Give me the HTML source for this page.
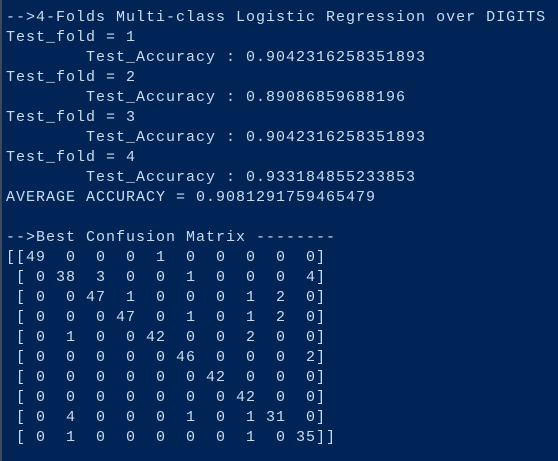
<!DOCTYPE html>
<html><head><meta charset="utf-8"><style>
html,body{margin:0;padding:0;}
body{width:558px;height:461px;background:#012456;overflow:hidden;border-left:2px solid #3c4a5e;box-sizing:border-box;}
pre{margin:0;padding:8px 0 0 4px;font-family:"Liberation Mono","Courier New",monospace;font-size:15px;letter-spacing:1px;line-height:20px;color:#c8dcf0;white-space:pre;}
</style></head><body><pre>--&gt;4-Folds Multi-class Logistic Regression over DIGITS
Test_fold = 1
        Test_Accuracy : 0.9042316258351893
Test_fold = 2
        Test_Accuracy : 0.89086859688196
Test_fold = 3
        Test_Accuracy : 0.9042316258351893
Test_fold = 4
        Test_Accuracy : 0.933184855233853
AVERAGE ACCURACY = 0.9081291759465479

--&gt;Best Confusion Matrix --------
[[49  0  0  0  1  0  0  0  0  0]
 [ 0 38  3  0  0  1  0  0  0  4]
 [ 0  0 47  1  0  0  0  1  2  0]
 [ 0  0  0 47  0  1  0  1  2  0]
 [ 0  1  0  0 42  0  0  2  0  0]
 [ 0  0  0  0  0 46  0  0  0  2]
 [ 0  0  0  0  0  0 42  0  0  0]
 [ 0  0  0  0  0  0  0 42  0  0]
 [ 0  4  0  0  0  1  0  1 31  0]
 [ 0  1  0  0  0  0  0  1  0 35]]
</pre></body></html>
